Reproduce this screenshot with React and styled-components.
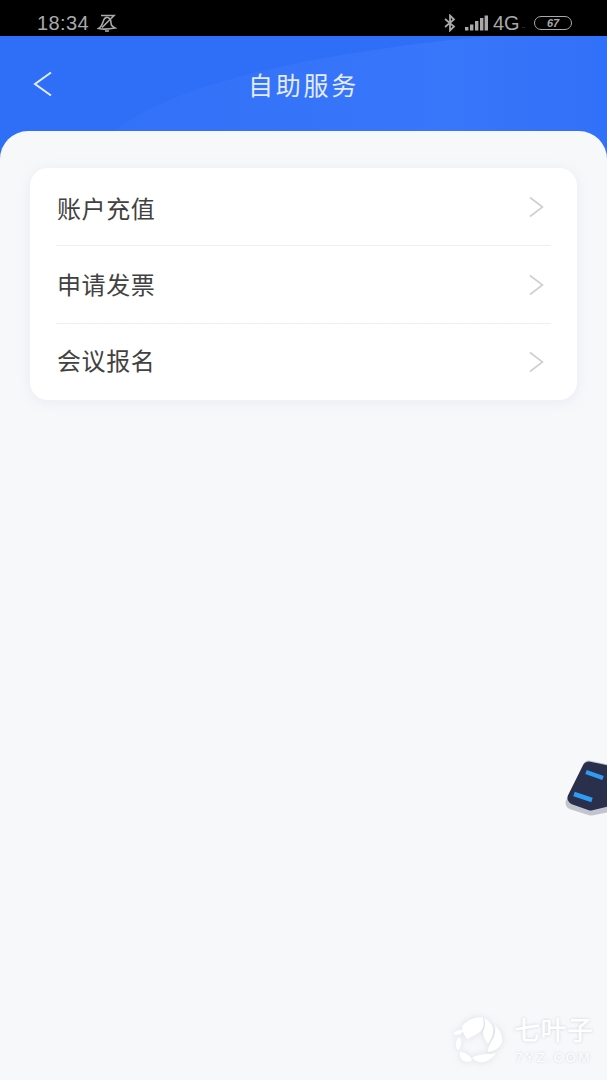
import styled, { createGlobalStyle } from "styled-components";

const GlobalStyle = createGlobalStyle`
  html, body {
    margin: 0;
    padding: 0;
    background: #f7f8fa;
  }
  body {
    font-family: "Noto Sans CJK SC", "Liberation Sans", sans-serif;
  }
`;

const Page = styled.div`
  position: relative;
  width: 607px;
  height: 1080px;
  overflow: hidden;
  display: flex;
  flex-direction: column;
`;

const StatusBar = styled.div`
  height: 36px;
  flex: none;
  background: #000;
  display: flex;
  align-items: center;
  justify-content: space-between;
  padding: 11px 35px 1px 37px;
  box-sizing: border-box;
  color: #a9a9a9;
  font-family: "Liberation Sans", sans-serif;
`;

const StatusGroup = styled.div`
  display: flex;
  align-items: center;
`;

const Time = styled.span`
  font-size: 20px;
  letter-spacing: 0.4px;
  margin-right: 8px;
`;

const BluetoothIcon = styled.svg`
  margin-right: 9px;
`;

const NetworkLabel = styled.span`
  font-size: 20px;
  margin-left: 5px;
`;

const NetworkSub = styled.span`
  font-size: 6px;
  margin: 6px 9px 0 2px;
`;

const Battery = styled.div`
  width: 36px;
  height: 12px;
  border: 1.5px solid #a9a9a9;
  border-radius: 7px;
  display: flex;
  align-items: center;
  justify-content: center;
  font-size: 11px;
  line-height: 12px;
  font-weight: 700;
  font-style: italic;
  color: #a9a9a9;
`;

const Header = styled.header`
  position: relative;
  flex: none;
  height: 125px;
  box-sizing: border-box;
  padding: 0 0 30px;
  display: flex;
  align-items: center;
  justify-content: center;
  overflow: hidden;
  background: #2f6ff7;
`;

const HeaderWave = styled.svg`
  position: absolute;
  top: 0;
  left: 0;
`;

const BackIcon = styled.svg`
  position: absolute;
  left: 33px;
  top: 35px;
`;

const Title = styled.h1`
  position: relative;
  margin: 0;
  font-size: 25px;
  line-height: 34px;
  font-weight: 400;
  letter-spacing: 2.8px;
  color: #e4ecfd;
`;

const Sheet = styled.main`
  position: relative;
  flex: 1;
  margin-top: -30px;
  padding: 37px 30px 0;
  background: #f7f8fa;
  border-radius: 28px 28px 0 0;
`;

const Card = styled.section`
  background: #fff;
  border-radius: 18px;
  padding: 0 26px;
  box-shadow: 0 2px 14px rgba(200, 205, 215, 0.28);
`;

const Row = styled.div`
  height: ${(p) => (p.$last ? "76px" : "78px")};
  box-sizing: border-box;
  display: flex;
  align-items: center;
  justify-content: space-between;
  padding: 0 7px 0 1px;
  border-bottom: ${(p) => (p.$last ? "none" : "1.5px solid #eeeff1")};
`;

const RowLabel = styled.span`
  padding-top: ${(p) => p.$pushDown}px;
  padding-bottom: ${(p) => p.$pushUp}px;
  font-size: 24px;
  line-height: 32px;
  letter-spacing: 0.6px;
  color: #414141;
`;

const FloatingRobot = styled.svg`
  position: absolute;
  right: 0;
  top: 756px;
`;

const Watermark = styled.div`
  position: absolute;
  left: 452px;
  top: 1013px;
  display: flex;
  align-items: flex-start;
  gap: 10px;
  color: #fff;
  text-shadow: 0 0 3px rgba(175, 180, 190, 0.6);
`;

const WatermarkLogo = styled.svg`
  filter: drop-shadow(0 0 3px rgba(190, 195, 205, 0.5));
`;

const WatermarkText = styled.div`
  display: flex;
  flex-direction: column;
  align-items: center;
  padding-top: 1px;
`;

const WatermarkName = styled.span`
  font-size: 26px;
  line-height: 30px;
  font-weight: 500;
  letter-spacing: 0.5px;
`;

const WatermarkSite = styled.span`
  font-family: "Liberation Sans", sans-serif;
  font-size: 13px;
  line-height: 16px;
  margin-top: 6px;
  letter-spacing: 2.7px;
`;

const Chevron = () => (
  <svg width="16" height="22" viewBox="0 0 16 22" fill="none">
    <path d="M2 1.5 L14.5 11 L2 20.5" stroke="#cfcfcf" strokeWidth="1.6" />
  </svg>
);

const BellOff = () => (
  <svg width="20" height="18" viewBox="0 0 20 18" fill="none" stroke="#a9a9a9" strokeWidth="1.6">
    <path d="M1.5 14.5 C4 13.5 5 11 6 8 C7 4.5 9 3 11 3.5 C13.5 4.5 14 7 14 9 C14 11 15 12.5 18 14 C13 15 6 15.5 1.5 14.5 Z" />
    <path d="M8 17 H12" />
    <path d="M4 1.5 H17 L5 13.5" />
  </svg>
);

const Bluetooth = () => (
  <BluetoothIcon width="12" height="18" viewBox="0 0 12 18" fill="none" stroke="#a9a9a9" strokeWidth="1.8">
    <path d="M1 5 L10 12.5 L6 16.5 V1.5 L10 5.5 L1 13" />
  </BluetoothIcon>
);

const Signal = () => (
  <svg width="23" height="16" viewBox="0 0 23 16" fill="#a9a9a9">
    <rect x="0" y="12" width="3.4" height="3.5" />
    <rect x="5" y="9.5" width="3.4" height="6" />
    <rect x="10" y="6" width="3.4" height="9.5" />
    <rect x="15" y="3" width="3.4" height="12.5" />
    <rect x="19.6" y="0.5" width="3.4" height="15" />
  </svg>
);

const LeafLogo = () => (
  <WatermarkLogo width="52" height="54" viewBox="0 0 52 54" fill="#fff">
    <path d="M10 13 C15 7 23 4 30 4 C33 10 32 15 28 19 C24 22 19 24 15 26 C12 22 10 18 10 13 Z" />
    <path d="M32 5 C38 8 42 13 41 20 C40 25 38 28 36 31 C33 27 31 23 31 19 C33 14 34 10 32 5 Z" />
    <path d="M43 12 C48 17 51 23 50 29 C48 35 43 38 36 39 C36 32 40 28 42 24 C43 20 44 16 43 12 Z" />
    <path d="M44 40 C40 46 34 50 27 49 C24 48 22 47 20 45 C24 42 30 41 35 41 C38 41 41 41 44 40 Z" />
    <path d="M8 39 C13 39 18 42 20 47 C17 50 13 49 10 47 C8 45 8 42 8 39 Z" />
    <path d="M7 24 C10 27 10 32 6 37 C3 34 3 28 7 24 Z" />
    <path d="M1 21 C3 18 8 16 12 17 C10 21 6 23 1 21 Z" />
  </WatermarkLogo>
);

const App = () => {
  const rows = [
    { label: "账户充值", pushDown: 3, pushUp: 0 },
    { label: "申请发票", pushDown: 0, pushUp: 1 },
    { label: "会议报名", pushDown: 0, pushUp: 5 },
  ];
  return (
    <Page>
      <GlobalStyle />
      <StatusBar>
        <StatusGroup>
          <Time>18:34</Time>
          <BellOff />
        </StatusGroup>
        <StatusGroup>
          <Bluetooth />
          <Signal />
          <NetworkLabel>4G</NetworkLabel>
          <NetworkSub>..</NetworkSub>
          <Battery>67</Battery>
        </StatusGroup>
      </StatusBar>
      <Header>
        <HeaderWave width="607" height="125" viewBox="0 0 607 125">
          <defs>
            <linearGradient id="waveFill" x1="0" y1="0" x2="1" y2="0">
              <stop offset="0" stopColor="#3271f8" />
              <stop offset="0.7" stopColor="#3876fa" />
              <stop offset="1" stopColor="#3170f8" />
            </linearGradient>
          </defs>
          <path d="M90 125 C120 60 280 20 490 0 L607 0 L607 125 Z" fill="url(#waveFill)" />
        </HeaderWave>
        <BackIcon width="20" height="26" viewBox="0 0 20 26" fill="none">
          <path d="M18 1.5 L2 13 L18 24.5" stroke="#e4ecfd" strokeWidth="2" />
        </BackIcon>
        <Title>自助服务</Title>
      </Header>
      <Sheet>
        <Card>
          {rows.map((row, i) => (
            <Row key={row.label} $last={i === rows.length - 1}>
              <RowLabel $pushDown={row.pushDown} $pushUp={row.pushUp}>
                {row.label}
              </RowLabel>
              <Chevron />
            </Row>
          ))}
        </Card>
      </Sheet>
      <FloatingRobot width="46" height="60" viewBox="0 0 46 60">
        <path
          d="M28 11 L46 15 L46 50 L30 53 L11 47 Z"
          fill="#c3c5ce"
          stroke="#c3c5ce"
          strokeWidth="13"
          strokeLinejoin="round"
        />
        <path
          d="M28 12 L46 16 L46 44 L30 48 L13 42 Z"
          fill="#2a2f4c"
          stroke="#2a2f4c"
          strokeWidth="13"
          strokeLinejoin="round"
        />
        <path d="M25 16 L42 22" stroke="#2e9cf2" strokeWidth="4.5" />
        <path d="M13 38 L31 44" stroke="#2e9cf2" strokeWidth="4.5" />
      </FloatingRobot>
      <Watermark>
        <LeafLogo />
        <WatermarkText>
          <WatermarkName>七叶子</WatermarkName>
          <WatermarkSite>7YZ.COM</WatermarkSite>
        </WatermarkText>
      </Watermark>
    </Page>
  );
};

export default App;
